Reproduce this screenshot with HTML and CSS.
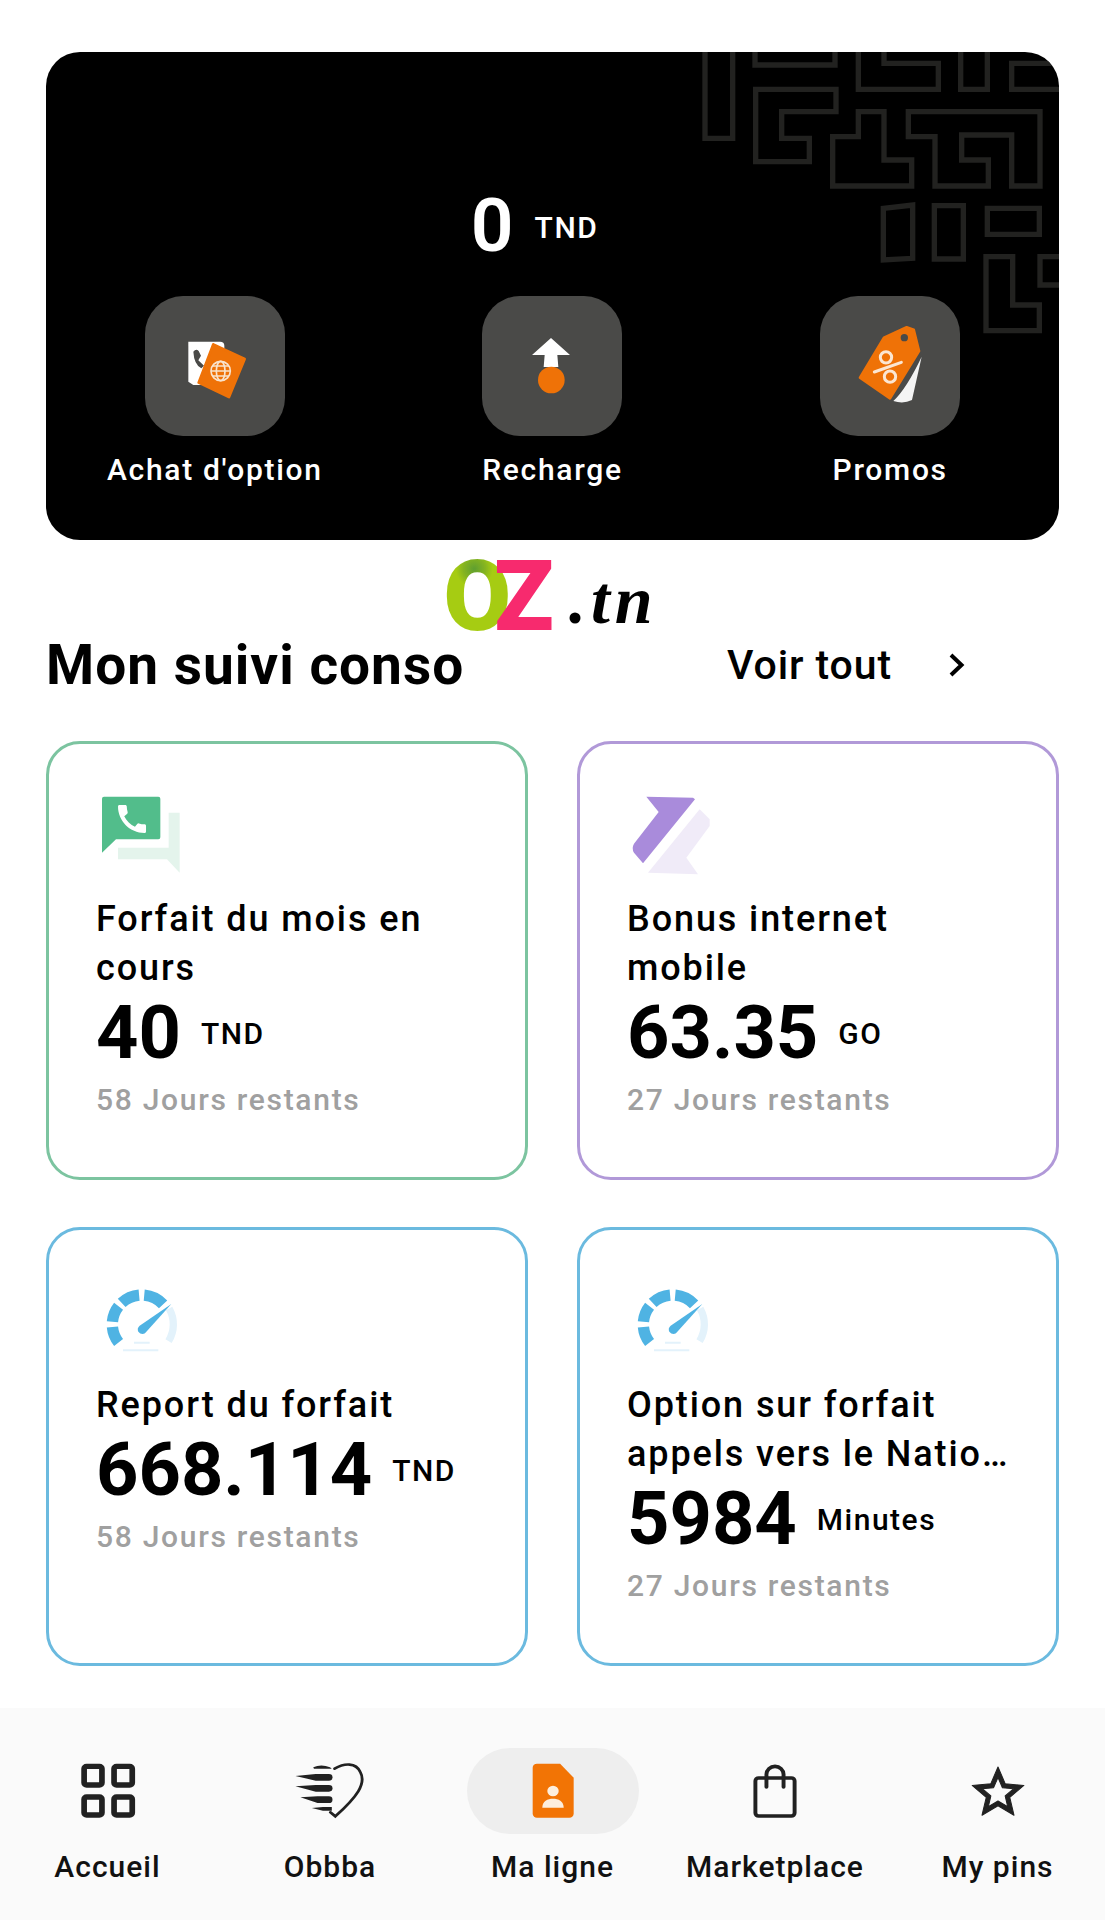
FILE: index.html
```html
<!DOCTYPE html>
<html lang="fr">
<head>
	<meta charset="UTF-8">
	<title>Ma ligne</title>
	<link rel="stylesheet" href="styles.css">
</head>
<body>
	<main class="content">
		<section class="hero">
			<svg class="hero-pattern" viewBox="0 36 1107 930" fill="none">
				<path d="M45 36V295H128V36"/>
				<path d="M195 36V75H435V36"/>
				<path d="M505 36V148H745V70H582V36"/>
				<path d="M812 36V148H892V36"/>
				<path d="M1107 70H965V148H1107"/>
				<path d="M197 148H438V215H275V295H358V365H197Z"/>
				<path d="M505 215H582V360H665V438H428V290H505Z"/>
				<path d="M655 215H1050V438H965V285H815V360H895V438H735V290H655Z"/>
				<path d="M580 505L668 495V655L580 660Z"/>
				<path d="M733 497H820V657H733Z"/>
				<path d="M892 505H1048V583H892Z"/>
				<path d="M888 650H968V795H1048V872H888Z"/>
				<path d="M1107 650H1050V735H1107"/>
			</svg>
			<div class="balance">
				<span class="balance-value">0</span>
				<span class="balance-unit">TND</span>
			</div>
			<div class="actions">
				<div class="action">
					<div class="tile">
						<svg viewBox="45 33 420 420">
							<path fill="#fff" d="M175 170H270Q283 170 283 182V300H190L175 290Z"/>
							<path fill="#4a4a48" d="M190 200Q198 190 206 198L213 212Q208 220 205 226L222 242L214 250Q192 238 190 200Z"/>
							<path fill="#ef7207" stroke="#ef7207" stroke-width="8" stroke-linejoin="round" d="M250 178L344 222L297 336L206 293Z"/>
							<g fill="none" stroke="#f9e3cc" stroke-width="5">
								<circle cx="272" cy="258" r="29"/>
								<ellipse cx="272" cy="258" rx="13" ry="29"/>
								<path d="M243 258H301M248 243H296M248 273H296"/>
							</g>
						</svg>
					</div>
					<span class="action-label">Achat d'option</span>
				</div>
				<div class="action">
					<div class="tile">
						<svg viewBox="0 0 420 420">
							<path fill="#fff" d="M207 126L264 177H226L229 213H185L188 177H150Z"/>
							<circle fill="#ef7207" cx="208" cy="252" r="40"/>
						</svg>
					</div>
					<span class="action-label">Recharge</span>
				</div>
				<div class="action">
					<div class="tile">
						<svg viewBox="30 33 420 420">
							<path fill="#f4f4f4" d="M335 215L306 345Q280 358 250 348Q290 310 335 215Z"/>
							<path fill="#ef7207" stroke="#ef7207" stroke-width="8" stroke-linejoin="round" d="M222 158L290 127L311 134L327 198L240 340L150 278Z"/>
							<circle fill="#4a4a48" cx="283" cy="158" r="11"/>
							<g fill="none" stroke="#fbe6d2" stroke-width="9">
								<circle cx="228" cy="217" r="17"/>
								<circle cx="240" cy="275" r="17"/>
								<path stroke-linecap="round" d="M193 261L274 232"/>
							</g>
						</svg>
					</div>
					<span class="action-label">Promos</span>
				</div>
			</div>
		</section>

		<div class="logo">
			<span class="logo-o">O</span><span class="logo-z">Z</span><span class="logo-tn">.tn</span>
		</div>

		<div class="section-head">
			<h2 class="section-title">Mon suivi conso</h2>
			<div class="see-all">
				<span>Voir tout</span>
				<svg class="chevron" viewBox="0 0 24 30" fill="none"><path d="M6 5L16.5 15L6 25"/></svg>
			</div>
		</div>

		<div class="cards">
			<article class="card card-green">
				<svg class="card-icon" viewBox="172 180 270 270">
					<path fill="#e4f4ec" d="M390 245H423V425L385 385H238V350H390Z"/>
					<path fill="#52bd8b" d="M196 197H359Q365 197 365 203V319Q365 325 359 325H232L190 365V203Q190 197 196 197Z"/>
					<path fill="#fff" transform="translate(224 208) scale(4.67)" d="M20.01 15.38c-1.23 0-2.42-.2-3.53-.56a.977.977 0 0 0-1.01.24l-1.57 1.97c-2.83-1.35-5.48-3.9-6.89-6.83l1.95-1.66c.27-.28.35-.67.24-1.02-.37-1.11-.56-2.3-.56-3.53 0-.54-.45-.99-.99-.99H4.19C3.65 3 3 3.24 3 3.99 3 13.28 10.73 21 20.01 21c.71 0 .99-.63.99-1.18v-3.45c0-.54-.45-.99-.99-.99z"/>
				</svg>
				<h3 class="card-title">Forfait du mois en cours</h3>
				<div class="amount">
					<span class="amount-value">40</span>
					<span class="amount-unit">TND</span>
				</div>
				<p class="days">58 Jours restants</p>
			</article>
			<article class="card card-purple">
				<svg class="card-icon" viewBox="177 180 270 270">
					<path fill="#f0ebf8" d="M395 235L425 265V285L355 380L390 430L240 425Z"/>
					<path fill="#a98bdb" d="M235 197L375 200L381 205L225 397L198 365Q190 352 198 338L272 243Z"/>
				</svg>
				<h3 class="card-title">Bonus internet mobile</h3>
				<div class="amount">
					<span class="amount-value">63.35</span>
					<span class="amount-unit">GO</span>
				</div>
				<p class="days">27 Jours restants</p>
			</article>
			<article class="card card-blue">
				<svg class="card-icon" viewBox="171 168 270 270">
					<use href="#gauge"/>
				</svg>
				<h3 class="card-title">Report du forfait</h3>
				<div class="amount">
					<span class="amount-value">668.114</span>
					<span class="amount-unit">TND</span>
				</div>
				<p class="days">58 Jours restants</p>
			</article>
			<article class="card card-blue">
				<svg class="card-icon" viewBox="171 168 270 270">
					<g id="gauge">
						<path fill="none" stroke="#e3f2fb" stroke-width="22" d="M390.3 262.5A95 95 0 0 1 388.6 360.3"/>
						<g fill="none" stroke="#4fb3e3" stroke-width="34">
							<path d="M238.7 364.2A88 88 0 0 1 220.3 317.7"/>
							<path d="M220.3 302.3A88 88 0 0 1 238.7 255.8"/>
							<path d="M248 245.7A88 88 0 0 1 300.3 222.3"/>
							<path d="M315.7 222.3A88 88 0 0 1 372.3 250"/>
						</g>
						<path fill="#4fb3e3" d="M397 249L318 337Q306 342 298 332Q293 322 302 314Z"/>
						<path fill="none" stroke="#e3f2fb" stroke-width="6" d="M252 388H358M285 365H332"/>
					</g>
				</svg>
				<h3 class="card-title">
					<span class="title-line">Option sur forfait</span>
					<span class="title-line">appels vers le National et international</span>
				</h3>
				<div class="amount">
					<span class="amount-value">5984</span>
					<span class="amount-unit">Minutes</span>
				</div>
				<p class="days">27 Jours restants</p>
			</article>
		</div>
	</main>

	<nav class="tabbar">
		<div class="tab">
			<div class="tab-icon">
				<svg viewBox="201 164 202 216" preserveAspectRatio="none" fill="none" stroke="#212121" stroke-width="16">
					<rect x="235" y="198" width="50" height="56" rx="7"/>
					<rect x="319" y="198" width="51" height="56" rx="7"/>
					<rect x="235" y="290" width="50" height="54" rx="7"/>
					<rect x="319" y="290" width="51" height="54" rx="7"/>
				</svg>
			</div>
			<span class="tab-label">Accueil</span>
		</div>
		<div class="tab">
			<div class="tab-icon">
				<svg viewBox="824 164 202 216" preserveAspectRatio="none">
					<path fill="none" stroke="#212121" stroke-width="8" stroke-linecap="round" d="M938 205C965 188 998 186 1010 215C1028 250 1000 290 940 348L926 336"/>
					<g fill="#212121">
						<path d="M878 201Q900 190 925 201L930 205H880Z"/>
						<path d="M828 227L885 221H922A9 9 0 0 1 922 241H885Z"/>
						<path d="M828 258L885 254H922A10 10 0 0 1 922 274H885Z"/>
						<path d="M842 291L890 288H922A10 10 0 0 1 922 308H890Z"/>
						<path d="M874 323L905 320H930V331H905Z"/>
					</g>
				</svg>
			</div>
			<span class="tab-label">Obbba</span>
		</div>
		<div class="tab">
			<div class="tab-icon tab-icon-active">
				<svg viewBox="1444 164 202 216" preserveAspectRatio="none">
					<path fill="#f27405" d="M1500 190H1565L1603 232V340A12 12 0 0 1 1591 352H1500A12 12 0 0 1 1488 340V202A12 12 0 0 1 1500 190Z"/>
					<circle fill="#fdeedd" cx="1545" cy="272" r="16"/>
					<path fill="#fdeedd" d="M1515 322C1515 302 1530 295 1545 295S1575 302 1575 322Z"/>
				</svg>
			</div>
			<span class="tab-label">Ma ligne</span>
		</div>
		<div class="tab">
			<div class="tab-icon">
				<svg viewBox="544 164 202 216" preserveAspectRatio="none" fill="none" stroke="#212121" stroke-width="11" stroke-linecap="round">
					<rect x="590" y="233" width="110" height="114" rx="9"/>
					<path d="M621 260V222A24 24 0 0 1 669 222V260"/>
				</svg>
			</div>
			<span class="tab-label">Marketplace</span>
		</div>
		<div class="tab">
			<div class="tab-icon">
				<svg viewBox="1169 164 202 216" preserveAspectRatio="none">
					<path fill="#212121" stroke="#212121" stroke-width=".4" stroke-linejoin="round" transform="translate(1183 185) scale(7.25 7.6)" d="M22 9.24l-7.19-.62L12 2 9.19 8.63 2 9.24l5.46 4.73L5.82 21 12 17.27 18.18 21l-1.63-7.03L22 9.24zM12 15.4l-3.76 2.27 1-4.28-3.32-2.88 4.38-.38L12 6.1l1.71 4.04 4.38.38-3.32 2.88 1 4.28L12 15.4z"/>
				</svg>
			</div>
			<span class="tab-label">My pins</span>
		</div>
	</nav>
</body>
</html>
```

FILE: styles.css
```css
*{
	margin: 0;
	padding: 0;
	box-sizing: border-box;
}
html,body{
	background: #fff;
}
body{
	width: 1105px;
	height: 1920px;
	overflow: hidden;
	display: flex;
	flex-direction: column;
	font-family: Roboto, "Liberation Sans", sans-serif;
	color: #000;
}
.content{
	flex: 1;
	padding: 52px 46px 0;
}

/* black card */
.hero{
	position: relative;
	height: 488px;
	padding-top: 138px;
	background: #000;
	border-radius: 34px;
	overflow: hidden;
	color: #fff;
}
.hero-pattern{
	position: absolute;
	top: 0;
	right: 0;
	width: 369px;
	height: 310px;
	stroke: #222220;
	stroke-width: 16;
}
.balance{
	display: flex;
	align-items: center;
	justify-content: center;
	gap: 21px;
	height: 70px;
	padding-right: 36px;
}
.balance-value{
	font-size: 75px;
	font-weight: 600;
	line-height: 70px;
}
.balance-unit{
	margin-top: 4px;
	font-size: 30px;
	font-weight: 500;
	letter-spacing: 1.5px;
}
.actions{
	display: grid;
	grid-template-columns: repeat(3, 1fr);
	margin-top: 36px;
}
.action{
	display: flex;
	flex-direction: column;
	align-items: center;
}
.tile{
	width: 140px;
	height: 140px;
	background: #4a4a48;
	border-radius: 38px;
}
.tile svg{
	display: block;
	width: 140px;
	height: 140px;
}
.action-label{
	margin-top: 14px;
	font-size: 30px;
	font-weight: 500;
	line-height: 40px;
	letter-spacing: 1.7px;
}

/* watermark */
.logo{
	height: 95px;
	padding-top: 12px;
	padding-right: 4px;
	text-align: center;
	white-space: nowrap;
	line-height: 90px;
}
.logo-o{
	font-size: 98px;
	font-weight: 900;
	color: #a6cc12;
	background: radial-gradient(circle at 46% 26%, #5f9f30 0, #85b420 12%, #a6cc12 20%);
	-webkit-background-clip: text;
	background-clip: text;
	-webkit-text-fill-color: transparent;
}
.logo-z{
	margin-left: -17px;
	font-size: 98px;
	font-weight: 900;
	color: #f72a6e;
}
.logo-tn{
	margin-left: 15px;
	font-family: "Liberation Serif", serif;
	font-size: 68px;
	font-style: italic;
	font-weight: 700;
	letter-spacing: 5px;
	vertical-align: 7px;
}

.section-head{
	display: flex;
	align-items: center;
	justify-content: space-between;
	height: 60px;
	padding-right: 90px;
}
.section-title{
	font-size: 55px;
	font-weight: 700;
	line-height: 60px;
	letter-spacing: 1px;
}
.see-all{
	display: flex;
	align-items: center;
	gap: 53px;
	font-size: 41px;
	font-weight: 500;
	letter-spacing: .9px;
}
.chevron{
	width: 24px;
	height: 30px;
	stroke: #000;
	stroke-width: 4;
}

.cards{
	display: grid;
	grid-template-columns: repeat(2, minmax(0, 1fr));
	gap: 47px 49px;
	margin-top: 46px;
}
.card{
	height: 439px;
	padding: 47px 47px 0;
	border: 3px solid;
	border-radius: 34px;
}
.card-green{ border-color: #7cc4a0; }
.card-purple{ border-color: #b199d8; }
.card-blue{ border-color: #6bbadf; }
.card-icon{
	display: block;
	width: 90px;
	height: 90px;
	margin-bottom: 14px;
}
.card-title{
	font-size: 36px;
	font-weight: 500;
	line-height: 49px;
	letter-spacing: 1.9px;
}
.title-line{
	display: block;
	overflow: hidden;
	white-space: nowrap;
	text-overflow: ellipsis;
}
.amount{
	display: flex;
	align-items: center;
	gap: 20px;
	height: 80px;
}
.amount-value{
	font-size: 74px;
	font-weight: 700;
	line-height: 80px;
}
.amount-unit{
	font-size: 30px;
	font-weight: 500;
	letter-spacing: 1.5px;
}
.days{
	margin-top: 7px;
	font-size: 30px;
	font-weight: 500;
	line-height: 40px;
	letter-spacing: 1.7px;
	color: #a0a0a0;
}

/* bottom tabs */
.tabbar{
	display: grid;
	grid-template-columns: repeat(5, 222.5px);
	justify-content: center;
	height: 212px;
	padding-top: 40px;
	background: #fafafa;
}
.tab{
	display: flex;
	flex-direction: column;
	align-items: center;
}
.tab-icon{
	display: flex;
	align-items: center;
	justify-content: center;
	width: 172px;
	height: 86px;
	border-radius: 43px;
}
.tab-icon svg{
	display: block;
	width: 72px;
	height: 72px;
}
.tab-icon-active{
	background: #eee;
}
.tab-label{
	margin-top: 13px;
	font-size: 30px;
	font-weight: 500;
	line-height: 40px;
	letter-spacing: 1px;
	white-space: nowrap;
	color: #111;
}
```
